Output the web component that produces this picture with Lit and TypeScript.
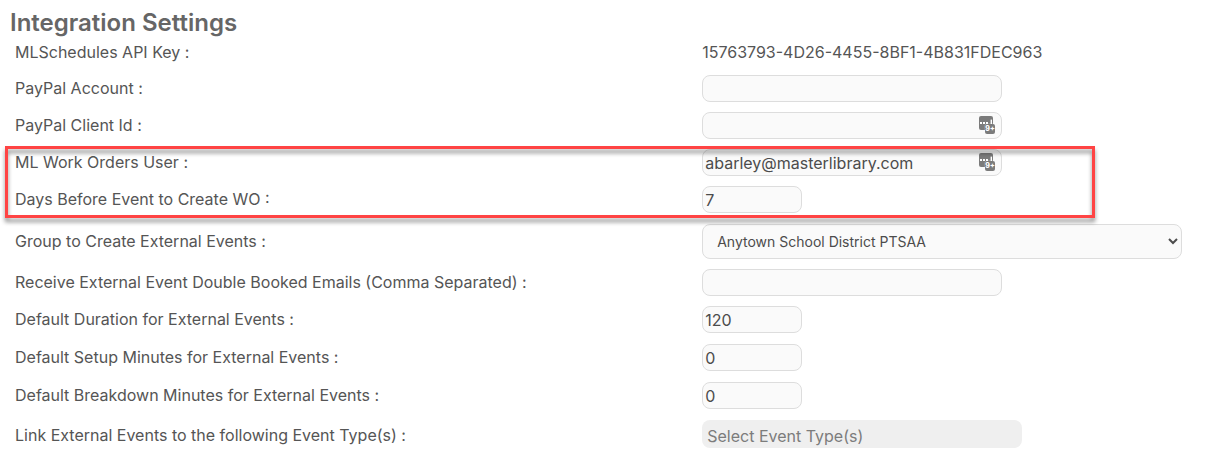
import { LitElement, html, css, svg } from "lit";
import { customElement } from "lit/decorators.js";

const autofillBadge = svg`
  <rect x="0" y="0" width="14" height="14" rx="2" fill="#7b7b7b"></rect>
  <rect x="1" y="6" width="2" height="2" fill="#fff"></rect>
  <rect x="4" y="6" width="2" height="2" fill="#fff"></rect>
  <rect x="7" y="6" width="2" height="2" fill="#fff"></rect>
  <rect x="11.6" y="3.6" width="1.4" height="4.4" fill="#fff"></rect>
  <rect x="5.6" y="7.6" width="10.8" height="10.8" rx="2.2" fill="#fff" opacity="0.35"></rect>
  <rect x="6" y="8" width="10" height="10" rx="2" fill="#7b7b7b"></rect>
  <text x="11" y="15.4" text-anchor="middle" class="count">9+</text>
`;

@customElement("app-root")
export class AppRoot extends LitElement {
  static styles = css`
    :host {
      display: block;
      background: #fff;
      color: #555;
      font-family: Inter, sans-serif;
      font-size: 16px;
      font-weight: 400;
      line-height: 20px;
    }
    .page {
      display: flex;
      flex-direction: column;
      gap: 10px;
      padding: 9px 22px 0 15px;
    }
    .heading {
      display: flex;
      flex-direction: column;
      gap: 5px;
      padding-bottom: 3px;
    }
    h1 {
      margin: 0 0 0 -5px;
      color: #666;
      font-size: 24px;
      font-weight: 600;
      line-height: 28px;
    }
    .row {
      display: grid;
      grid-template-columns: 11fr 8fr;
      align-items: center;
    }
    label {
      padding-bottom: 2px;
    }
    .number {
      min-height: 28px;
    }
    .event-types {
      min-height: 32px;
    }
    .group {
      position: relative;
      z-index: 1;
      display: flex;
      flex-direction: column;
      gap: 10px;
    }
    .marker {
      position: absolute;
      inset: -3px 107px -4px -10px;
      border: 3px solid #ff4444;
      filter: drop-shadow(0 4px 2px rgba(0, 0, 0, 0.45));
      pointer-events: none;
    }
    .field {
      position: relative;
      width: 300px;
      max-width: 100%;
    }
    input,
    select {
      display: block;
      box-sizing: border-box;
      width: 100%;
      height: 27px;
      margin: 0;
      padding: 0 2px;
      border: 1px solid #ddd;
      border-radius: 8px;
      background-color: #fafafa;
      color: #4c4c4c;
      font: inherit;
    }
    .short {
      align-self: start;
      width: 100px;
    }
    select {
      width: 480px;
      max-width: 100%;
      height: 35px;
      padding: 0 0 0 10px;
      font-size: 14px;
    }
    .types {
      align-self: start;
      width: 320px;
      height: 28px;
      padding: 4px 5px 0;
      border: 0;
      background-color: #efefef;
    }
    .types::placeholder {
      color: #7c7c7c;
    }
    .badge {
      position: absolute;
      top: 4px;
      right: 7px;
      width: 16px;
      height: 18px;
    }
    .count {
      fill: #fff;
      font-size: 7px;
      font-weight: 800;
    }
  `;

  private badge() {
    return html`<svg class="badge" viewBox="0 0 16 18" aria-hidden="true">${autofillBadge}</svg>`;
  }

  private textRow(id: string, label: string, value = "", badge = false) {
    return html`<div class="row">
      <label for=${id}>${label} :</label>
      <div class="field">
        <input id=${id} type="text" .value=${value} />
        ${badge ? this.badge() : ""}
      </div>
    </div>`;
  }

  private numberRow(id: string, label: string, value: string) {
    return html`<div class="row number">
      <label for=${id}>${label} :</label>
      <input id=${id} class="short" type="number" .value=${value} />
    </div>`;
  }

  render() {
    return html`<form class="page">
      <div class="heading">
        <h1>Integration Settings</h1>
        <div class="row">
          <span>MLSchedules API Key :</span>
          <span>15763793-4D26-4455-8BF1-4B831FDEC963</span>
        </div>
      </div>
      ${this.textRow("paypal-account", "PayPal Account")}
      ${this.textRow("paypal-client", "PayPal Client Id", "", true)}
      <div class="group">
        ${this.textRow("wo-user", "ML Work Orders User", "abarley@masterlibrary.com", true)}
        ${this.numberRow("wo-days", "Days Before Event to Create WO", "7")}
        <div class="marker"></div>
      </div>
      <div class="row">
        <label for="group">Group to Create External Events :</label>
        <select id="group">
          <option>Anytown School District PTSAA</option>
        </select>
      </div>
      ${this.textRow("emails", "Receive External Event Double Booked Emails (Comma Separated)")}
      ${this.numberRow("duration", "Default Duration for External Events", "120")}
      ${this.numberRow("setup", "Default Setup Minutes for External Events", "0")}
      ${this.numberRow("breakdown", "Default Breakdown Minutes for External Events", "0")}
      <div class="row event-types">
        <label for="types">Link External Events to the following Event Type(s) :</label>
        <input id="types" class="types" type="text" placeholder="Select Event Type(s)" />
      </div>
    </form>`;
  }
}
